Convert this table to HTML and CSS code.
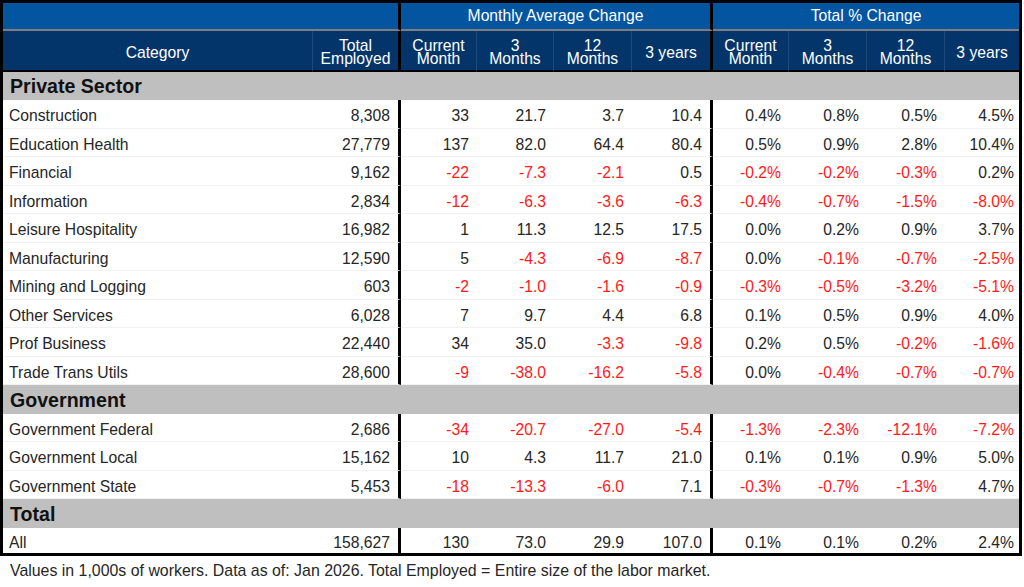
FILE: index.html
```html
<!DOCTYPE html>
<html lang="en">
<head>
<meta charset="utf-8">
<title>Employment Change</title>
<link rel="stylesheet" href="styles.css">
</head>
<body>
<div class="frame">
<table class="jobs">
  <colgroup>
    <col class="w-cat"><col class="w-tot">
    <col class="w-m1"><col class="w-m2"><col class="w-m3"><col class="w-m4">
    <col class="w-p1"><col class="w-p2"><col class="w-p3"><col class="w-p4">
  </colgroup>
  <thead>
    <tr class="super">
      <th colspan="2" class="thick"></th>
      <th colspan="4" class="thick">Monthly Average Change</th>
      <th colspan="4">Total % Change</th>
    </tr>
    <tr class="sub">
      <th class="faint">Category</th>
      <th class="thick">Total<br>Employed</th>
      <th class="faint">Current<br>Month</th>
      <th class="faint">3<br>Months</th>
      <th class="faint">12<br>Months</th>
      <th class="thick">3 years</th>
      <th class="faint">Current<br>Month</th>
      <th class="faint">3<br>Months</th>
      <th class="faint">12<br>Months</th>
      <th>3 years</th>
    </tr>
  </thead>
  <tbody>
    <tr class="group"><td colspan="10">Private Sector</td></tr>
    <tr><td class="cat">Construction</td><td class="num thick">8,308</td><td class="num">33</td><td class="num">21.7</td><td class="num">3.7</td><td class="num thick">10.4</td><td class="num">0.4%</td><td class="num">0.8%</td><td class="num">0.5%</td><td class="num last">4.5%</td></tr>
    <tr><td class="cat">Education Health</td><td class="num thick">27,779</td><td class="num">137</td><td class="num">82.0</td><td class="num">64.4</td><td class="num thick">80.4</td><td class="num">0.5%</td><td class="num">0.9%</td><td class="num">2.8%</td><td class="num last">10.4%</td></tr>
    <tr><td class="cat">Financial</td><td class="num thick">9,162</td><td class="num neg">-22</td><td class="num neg">-7.3</td><td class="num neg">-2.1</td><td class="num thick">0.5</td><td class="num neg">-0.2%</td><td class="num neg">-0.2%</td><td class="num neg">-0.3%</td><td class="num last">0.2%</td></tr>
    <tr><td class="cat">Information</td><td class="num thick">2,834</td><td class="num neg">-12</td><td class="num neg">-6.3</td><td class="num neg">-3.6</td><td class="num thick neg">-6.3</td><td class="num neg">-0.4%</td><td class="num neg">-0.7%</td><td class="num neg">-1.5%</td><td class="num last neg">-8.0%</td></tr>
    <tr><td class="cat">Leisure Hospitality</td><td class="num thick">16,982</td><td class="num">1</td><td class="num">11.3</td><td class="num">12.5</td><td class="num thick">17.5</td><td class="num">0.0%</td><td class="num">0.2%</td><td class="num">0.9%</td><td class="num last">3.7%</td></tr>
    <tr><td class="cat">Manufacturing</td><td class="num thick">12,590</td><td class="num">5</td><td class="num neg">-4.3</td><td class="num neg">-6.9</td><td class="num thick neg">-8.7</td><td class="num">0.0%</td><td class="num neg">-0.1%</td><td class="num neg">-0.7%</td><td class="num last neg">-2.5%</td></tr>
    <tr><td class="cat">Mining and Logging</td><td class="num thick">603</td><td class="num neg">-2</td><td class="num neg">-1.0</td><td class="num neg">-1.6</td><td class="num thick neg">-0.9</td><td class="num neg">-0.3%</td><td class="num neg">-0.5%</td><td class="num neg">-3.2%</td><td class="num last neg">-5.1%</td></tr>
    <tr><td class="cat">Other Services</td><td class="num thick">6,028</td><td class="num">7</td><td class="num">9.7</td><td class="num">4.4</td><td class="num thick">6.8</td><td class="num">0.1%</td><td class="num">0.5%</td><td class="num">0.9%</td><td class="num last">4.0%</td></tr>
    <tr><td class="cat">Prof Business</td><td class="num thick">22,440</td><td class="num">34</td><td class="num">35.0</td><td class="num neg">-3.3</td><td class="num thick neg">-9.8</td><td class="num">0.2%</td><td class="num">0.5%</td><td class="num neg">-0.2%</td><td class="num last neg">-1.6%</td></tr>
    <tr><td class="cat">Trade Trans Utils</td><td class="num thick">28,600</td><td class="num neg">-9</td><td class="num neg">-38.0</td><td class="num neg">-16.2</td><td class="num thick neg">-5.8</td><td class="num">0.0%</td><td class="num neg">-0.4%</td><td class="num neg">-0.7%</td><td class="num last neg">-0.7%</td></tr>
    <tr class="group"><td colspan="10">Government</td></tr>
    <tr><td class="cat">Government Federal</td><td class="num thick">2,686</td><td class="num neg">-34</td><td class="num neg">-20.7</td><td class="num neg">-27.0</td><td class="num thick neg">-5.4</td><td class="num neg">-1.3%</td><td class="num neg">-2.3%</td><td class="num neg">-12.1%</td><td class="num last neg">-7.2%</td></tr>
    <tr><td class="cat">Government Local</td><td class="num thick">15,162</td><td class="num">10</td><td class="num">4.3</td><td class="num">11.7</td><td class="num thick">21.0</td><td class="num">0.1%</td><td class="num">0.1%</td><td class="num">0.9%</td><td class="num last">5.0%</td></tr>
    <tr><td class="cat">Government State</td><td class="num thick">5,453</td><td class="num neg">-18</td><td class="num neg">-13.3</td><td class="num neg">-6.0</td><td class="num thick">7.1</td><td class="num neg">-0.3%</td><td class="num neg">-0.7%</td><td class="num neg">-1.3%</td><td class="num last">4.7%</td></tr>
    <tr class="group"><td colspan="10">Total</td></tr>
    <tr class="final"><td class="cat">All</td><td class="num thick">158,627</td><td class="num">130</td><td class="num">73.0</td><td class="num">29.9</td><td class="num thick">107.0</td><td class="num">0.1%</td><td class="num">0.1%</td><td class="num">0.2%</td><td class="num last">2.4%</td></tr>
  </tbody>
</table>
</div>
<p class="note">Values in 1,000s of workers. Data as of: Jan 2026. Total Employed = Entire size of the labor market.</p>
</body>
</html>
```
FILE: styles.css
```css
html, body {
  margin: 0;
  padding: 0;
  background: #ffffff;
}

body {
  font-family: "Liberation Sans", Arial, Helvetica, sans-serif;
  color: #262626;
}

.frame {
  width: 1016px;
  border: 3px solid #000000;
}

.jobs {
  width: 1016px;
  table-layout: fixed;
  border-collapse: separate;
  border-spacing: 0;
  font-size: 15.7px;
}

.w-cat { width: 310px; }
.w-tot { width: 88px; }
.w-m1 { width: 76px; }
.w-m2 { width: 77px; }
.w-m3 { width: 78px; }
.w-m4 { width: 81px; }
.w-p1 { width: 76px; }
.w-p2 { width: 78px; }
.w-p3 { width: 78px; }
.w-p4 { width: 74px; }

.jobs th,
.jobs td {
  box-sizing: border-box;
  padding: 0;
  white-space: nowrap;
  overflow: hidden;
}

.jobs th {
  font-weight: normal;
  color: #ffffff;
  text-align: center;
  vertical-align: middle;
}

.jobs .super th {
  height: 27.5px;
  background: #0455a0;
  border-bottom: 2px solid #7d7d7d;
  padding-top: 1px;
}

.jobs .sub th {
  height: 41px;
  background: #04356a;
  border-bottom: 2px solid #000000;
  line-height: 13px;
  padding-top: 4px;
}

.jobs .sub th.faint {
  border-right: 1px solid #1c4a7b;
}

.jobs .thick,
.jobs .sub th.thick {
  border-right: 3px solid #000000;
}

.jobs td {
  height: 28.5px;
  vertical-align: middle;
  padding-top: 5px;
  border-bottom: 1px solid #f1f1f1;
}

.jobs .group td {
  background: #bfbfbf;
  font-weight: bold;
  font-size: 19.6px;
  color: #111111;
  padding-left: 7px;
  padding-top: 2px;
  border-bottom: none;
}

.jobs td.cat {
  text-align: left;
  padding-left: 6px;
}

.jobs td.num {
  text-align: right;
  padding-right: 8px;
}

.jobs td.num.last {
  padding-right: 5px;
}

.jobs td.neg {
  color: #ff1a1a;
}

.jobs .final td {
  height: 25px;
  border-bottom: none;
  padding-top: 5px;
}

.note {
  margin: 5px 0 0;
  padding-left: 10px;
  font-size: 15.9px;
  line-height: 20px;
  color: #262626;
}
```
